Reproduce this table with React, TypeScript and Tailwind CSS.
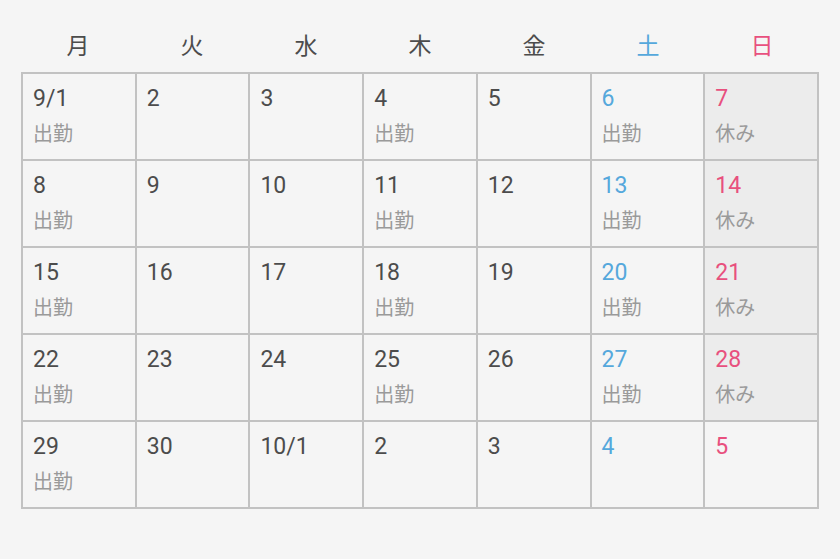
import React from "react";

const days = ["月", "火", "水", "木", "金", "土", "日"];

type Cell = { d: string; label?: string };

const weeks: Cell[][] = [
  [
    { d: "9/1", label: "出勤" },
    { d: "2" },
    { d: "3" },
    { d: "4", label: "出勤" },
    { d: "5" },
    { d: "6", label: "出勤" },
    { d: "7", label: "休み" },
  ],
  [
    { d: "8", label: "出勤" },
    { d: "9" },
    { d: "10" },
    { d: "11", label: "出勤" },
    { d: "12" },
    { d: "13", label: "出勤" },
    { d: "14", label: "休み" },
  ],
  [
    { d: "15", label: "出勤" },
    { d: "16" },
    { d: "17" },
    { d: "18", label: "出勤" },
    { d: "19" },
    { d: "20", label: "出勤" },
    { d: "21", label: "休み" },
  ],
  [
    { d: "22", label: "出勤" },
    { d: "23" },
    { d: "24" },
    { d: "25", label: "出勤" },
    { d: "26" },
    { d: "27", label: "出勤" },
    { d: "28", label: "休み" },
  ],
  [
    { d: "29", label: "出勤" },
    { d: "30" },
    { d: "10/1" },
    { d: "2" },
    { d: "3" },
    { d: "4" },
    { d: "5" },
  ],
];

const App = () => {
  return (
    <div
      className="w-[840px] h-[559px] bg-[#f5f5f5] px-[21px]"
      style={{ fontFamily: "Roboto, 'Noto Sans CJK JP', sans-serif" }}
    >
      <div className="grid grid-cols-7 pt-[29px] pb-[7px]">
        {days.map((day, i) => (
          <div
            key={day}
            className={
              "text-center text-[23px] leading-[36px] " +
              (i === 5 ? "text-[#55a8dc]" : i === 6 ? "text-[#e8507e]" : "text-[#4c4c4c]")
            }
          >
            {day}
          </div>
        ))}
      </div>
      <div className="grid grid-cols-7 border-l-2 border-t-2 border-[#c2c2c2]">
        {weeks.map((week, w) =>
          week.map((c, i) => (
            <div
              key={w + "-" + i}
              className={
                "h-[87px] border-r-2 border-b-2 border-[#c2c2c2] pl-[10px] pt-[11px] " +
                (i === 6 && w < 4 ? "bg-[#ececec]" : "")
              }
            >
              <div
                className={
                  "text-[23px] leading-[28px] " +
                  (i === 5 ? "text-[#55a8dc]" : i === 6 ? "text-[#e8507e]" : "text-[#4c4c4c]")
                }
              >
                {c.d}
              </div>
              {c.label && (
                <div className="mt-[7px] text-[20px] leading-[28px] text-[#9a9a9a]">{c.label}</div>
              )}
            </div>
          ))
        )}
      </div>
    </div>
  );
};

export default App;
